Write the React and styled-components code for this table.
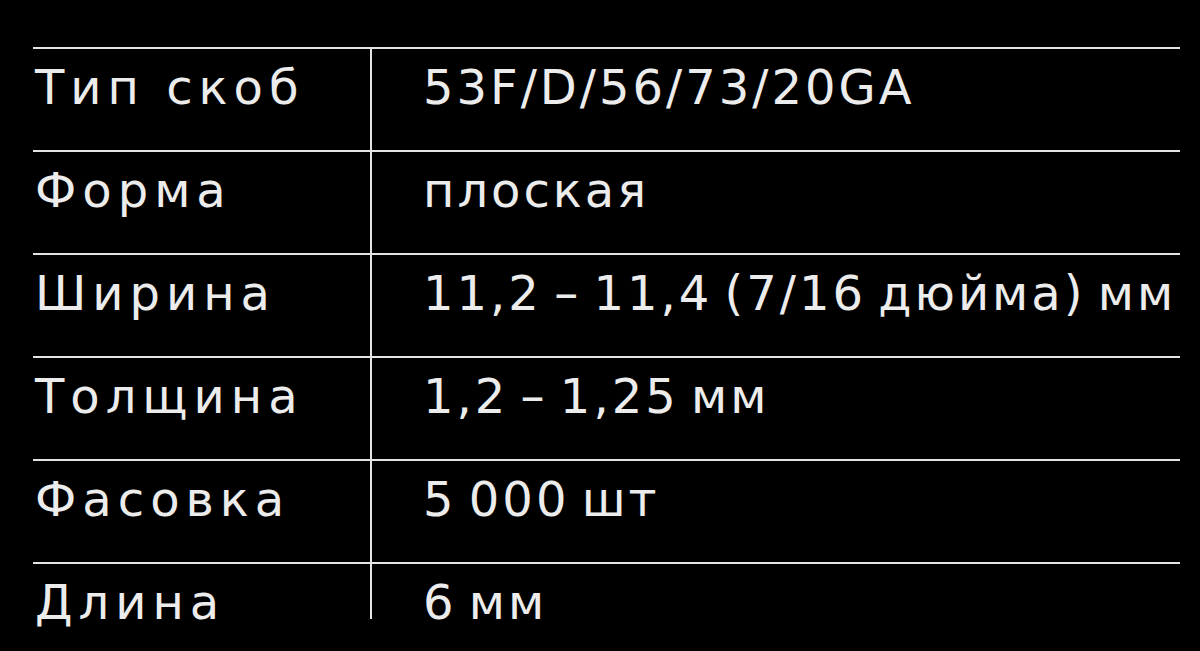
import React from "react";
import styled, { createGlobalStyle } from "styled-components";

const GlobalStyle = createGlobalStyle`
  html, body {
    margin: 0;
    padding: 0;
    background: #000;
  }
  body {
    width: 1200px;
    height: 651px;
    overflow: hidden;
  }
`;

export const Sheet = styled.div`
  width: 1200px;
  height: 651px;
  background: #000;
  padding: 47px 20px 0 33px;
  box-sizing: border-box;
  font-family: "DejaVu Sans", "Noto Sans", sans-serif;
  color: #ececec;
`;

export const Table = styled.div`
  width: 1147px;
  display: flex;
  flex-direction: column;
`;

export const Row = styled.div`
  display: grid;
  grid-template-columns: 339px 1fr;
  grid-template-rows: minmax(0, 1fr);
  height: ${(p) => (p.last ? "57px" : "103px")};
  border-top: 2px solid #e4e4e4;
  box-sizing: border-box;
`;

export const Label = styled.div`
  border-right: 2px solid #e4e4e4;
  padding: 7px 0 0 2px;
  font-size: 48px;
  line-height: 62px;
  white-space: nowrap;
  letter-spacing: 6px;
  overflow: visible;
`;

export const Value = styled.div`
  padding: 7px 0 0 51px;
  font-size: 48px;
  line-height: 62px;
  white-space: nowrap;
  letter-spacing: 3px;
  word-spacing: -6px;
  overflow: visible;
`;

const rows = [
  ["Тип скоб", "53F/D/56/73/20GA"],
  ["Форма", "плоская"],
  ["Ширина", "11,2 – 11,4 (7/16 дюйма) мм"],
  ["Толщина", "1,2 – 1,25 мм"],
  ["Фасовка", "5 000 шт"],
  ["Длина", "6 мм"],
];

const App = () => {
  return (
    <Sheet>
      <GlobalStyle />
      <Table>
        {rows.map(([name, value], i) => (
          <Row key={name} last={i === rows.length - 1}>
            <Label>{name}</Label>
            <Value>{value}</Value>
          </Row>
        ))}
      </Table>
    </Sheet>
  );
};

export default App;
